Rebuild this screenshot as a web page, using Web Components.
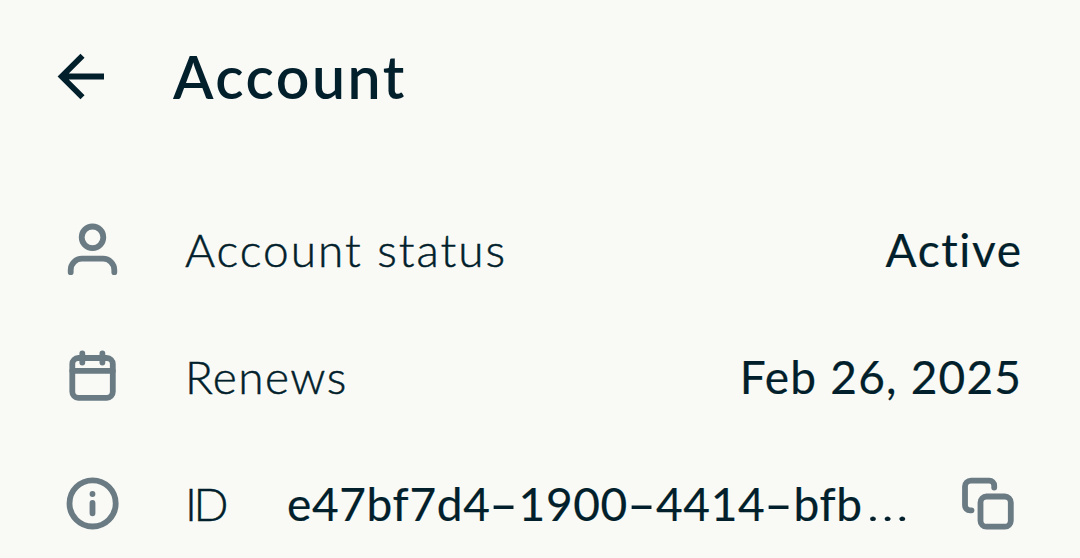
<!DOCTYPE html>
<html lang="en">
<head>
<meta charset="utf-8">
<title>Account</title>
<style>
  body {
    margin: 0;
    height: 558px;
    overflow: hidden;
    background: #f9f9f5;
    color: #021f2c;
    font-family: Lato, "Open Sans", sans-serif;
  }
</style>
</head>
<body>
<account-page></account-page>

<script>
const icons = {
  back: '<path d="M104 30.5H62M82.5 9.7 61.7 30.5 82.5 51.3" transform="translate(-54)" stroke-linecap="butt" stroke-linejoin="miter"/>',
  user: '<circle cx="30.5" cy="17.3" r="10.8"/><path d="M8.7 52.2V50a11.3 11.3 0 0 1 11.3-11.3H41A11.3 11.3 0 0 1 52.3 50v2.2"/>',
  calendar: '<rect x="10.3" y="11" width="40.5" height="39.8" rx="6"/><path d="M10.3 23.8h40.5M20.3 6.5v9M40.4 6.5v9"/>',
  info: '<circle cx="30.6" cy="29.4" r="23.1"/><path d="M30.5 29v10.3M30.5 20v.01"/>',
  copy: '<rect x="23.5" y="22.5" width="30.3" height="30.2" rx="6"/><path d="M37.2 13.6V11.6a5 5 0 0 0-5-5H14a6 6 0 0 0-6 6V31.3a5 5 0 0 0 5 5h1.5"/>',
};

class AppIcon extends HTMLElement {
  connectedCallback() {
    const shadow = this.attachShadow({ mode: 'open' });
    shadow.innerHTML = `
      <style>
        :host { display: block; flex: none; width: 61px; height: 61px; color: #6a7b83; }
        :host([name="back"]) { color: inherit; }
        svg {
          display: block;
          fill: none;
          stroke: currentColor;
          stroke-width: 5.8;
          stroke-linecap: round;
          stroke-linejoin: round;
        }
      </style>
      <svg width="61" height="61" viewBox="0 0 61 61">${icons[this.getAttribute('name')]}</svg>
    `;
  }
}

const headerTemplate = document.createElement('template');
headerTemplate.innerHTML = /* html */ `
<style>
  :host { display: flex; align-items: center; height: 153px; margin-bottom: 34px; padding: 0 60px 0 54px; box-sizing: border-box; }
  h1 {
    margin: 0 0 0 58px;
    font-size: 59px;
    font-weight: 600;
    line-height: 70px;
    letter-spacing: 2.5px;
    white-space: nowrap;
  }
</style>
<app-icon name="back"></app-icon>
<h1><slot></slot></h1>
`;

class PageHeader extends HTMLElement {
  constructor() {
    super();
    this.attachShadow({ mode: 'open' }).appendChild(headerTemplate.content.cloneNode(true));
  }
}

const rowTemplate = document.createElement('template');
rowTemplate.innerHTML = /* html */ `
<style>
  :host {
    display: flex;
    align-items: center;
    height: 127px;
    padding: 0 59px 0 62px;
    font-size: 46px;
    line-height: 56px;
    white-space: nowrap;
  }
  .label, .value { padding-bottom: 1px; }
  .label {
    margin-left: 62px;
    font-weight: 300;
    letter-spacing: var(--label-spacing, 1px);
    -webkit-text-stroke: 0.5px currentColor;
  }
  .value {
    margin-left: auto;
    margin-right: calc(var(--value-spacing, 1px) * -1);
    font-weight: 400;
    letter-spacing: var(--value-spacing, 1px);
    -webkit-text-stroke: 0.2px currentColor;
  }
</style>
<slot name="icon"></slot>
<span class="label"><slot name="label"></slot></span>
<span class="value"><slot></slot></span>
<slot name="action"></slot>
`;

class InfoRow extends HTMLElement {
  constructor() {
    super();
    this.attachShadow({ mode: 'open' }).appendChild(rowTemplate.content.cloneNode(true));
  }
}

const pageTemplate = document.createElement('template');
pageTemplate.innerHTML = /* html */ `
<style>
  :host { display: block; }
  .status { --label-spacing: 2px; --value-spacing: 1.6px; }
  .renews { --label-spacing: 1.4px; --value-spacing: 1.2px; }
  .id { --label-spacing: -3.5px; --value-spacing: 0.65px; }
  .id app-icon[slot="action"] { margin: 0 3px 0 50px; }
  .dash, .more { display: inline-block; letter-spacing: 0; }
  .dash { margin: 0 6px 0 5px; transform: scaleX(1.7); }
  .more { margin-left: 3px; width: 42px; font-weight: 300; transform: scaleX(1.3); transform-origin: left; }
</style>
<page-header>Account</page-header>
<info-row class="status">
  <app-icon slot="icon" name="user"></app-icon>
  <span slot="label">Account status</span>Active</info-row>
<info-row class="renews">
  <app-icon slot="icon" name="calendar"></app-icon>
  <span slot="label">Renews</span>Feb 26, 2025</info-row>
<info-row class="id">
  <app-icon slot="icon" name="info"></app-icon>
  <span slot="label">ID</span>e47bf7d4<span class="dash">-</span>1900<span class="dash">-</span>4414<span class="dash">-</span>bfb<span class="more">…</span><app-icon slot="action" name="copy"></app-icon>
</info-row>
`;

class AccountPage extends HTMLElement {
  constructor() {
    super();
    this.attachShadow({ mode: 'open' }).appendChild(pageTemplate.content.cloneNode(true));
  }
}

customElements.define('app-icon', AppIcon);
customElements.define('page-header', PageHeader);
customElements.define('info-row', InfoRow);
customElements.define('account-page', AccountPage);
</script>
</body>
</html>
